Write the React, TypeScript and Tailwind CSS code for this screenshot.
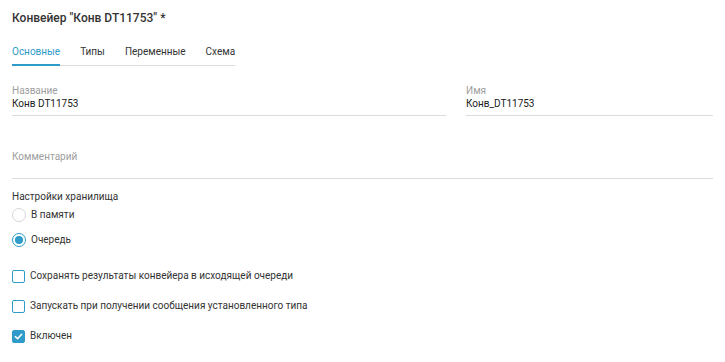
import React, { useState } from 'react';

const Field = ({ label, value, className = '' }: { label: string; value?: string; className?: string }) => (
  <div className={`flex flex-col border-b border-[#dcdcdc] ${className}`}>
    <span className="text-[10px] leading-[12px] text-[#9e9e9e]">{label}</span>
    {value !== undefined && <span className="text-[10px] leading-[14px] text-[#212121] pb-[4px]">{value}</span>}
  </div>
);

const Radio = ({ label, checked }: { label: string; checked?: boolean }) => (
  <label className="flex items-center gap-[5px] h-[14px] leading-[14px]">
    <span
      className={`flex items-center justify-center w-[14px] h-[14px] rounded-full border ${
        checked ? 'border-[#2e9bc8]' : 'border-[#d6d6d6]'
      }`}
    >
      {checked && <span className="w-[8px] h-[8px] rounded-full bg-[#2e9bc8]" />}
    </span>
    <span className="text-[10px] text-[#333]">{label}</span>
  </label>
);

const Checkbox = ({ label, checked }: { label: string; checked?: boolean }) => (
  <label className="flex items-center gap-[5px] h-[14px] leading-[14px]">
    <span
      className={`flex items-center justify-center w-[13px] h-[13px] rounded-[2px] border ${
        checked ? 'border-[#2e9bc8] bg-[#2e9bc8]' : 'border-[#2e9bc8] bg-white'
      }`}
    >
      {checked && (
        <svg width="9" height="9" viewBox="0 0 10 10" fill="none">
          <path d="M1.5 5.2L4 7.5L8.5 2.5" stroke="white" strokeWidth="1.8" strokeLinecap="round" strokeLinejoin="round" />
        </svg>
      )}
    </span>
    <span className="text-[10px] text-[#333]">{label}</span>
  </label>
);

export default function App() {
  const [tab] = useState('Основные');
  const tabs = ['Основные', 'Типы', 'Переменные', 'Схема'];

  return (
    <div className="w-[725px] h-[362px] bg-white px-[12px] pt-[10px]" style={{ fontFamily: 'Roboto, "Liberation Sans", sans-serif' }}>
      <h1 className="text-[12px] leading-[16px] font-medium text-[#333]">Конвейер "Конв DT11753" *</h1>

      <div className="mt-[20px] flex w-[223px] border-b border-[#dcdcdc]">
        {tabs.map((t) => (
          <div
            key={t}
            className={`text-[10px] leading-[12px] pb-[6px] mr-[20px] ${
              t === tab ? 'text-[#2e9bc8] border-b-2 border-[#2e9bc8] -mb-[1px]' : 'text-[#333]'
            }`}
          >
            {t}
          </div>
        ))}
      </div>

      <div className="mt-[19px] flex gap-[20px] w-[701px]">
        <Field label="Название" value="Конв DT11753" className="flex-1" />
        <Field label="Имя" value="Конв_DT11753" className="w-[247px]" />
      </div>

      <div className="mt-[35px] w-[701px] border-b border-[#dcdcdc] pb-[15px]">
        <div className="text-[10px] leading-[12px] text-[#9e9e9e]">Комментарий</div>
      </div>

      <div className="mt-[11px] text-[10px] leading-[14px] text-[#333]">Настройки хранилища</div>
      <div className="mt-[4px] flex flex-col gap-[11px]">
        <Radio label="В памяти" />
        <Radio label="Очередь" checked />
      </div>

      <div className="mt-[22px] flex flex-col gap-[16px]">
        <Checkbox label="Сохранять результаты конвейера в исходящей очереди" />
        <Checkbox label="Запускать при получении сообщения установленного типа" />
        <Checkbox label="Включен" checked />
      </div>
    </div>
  );
}
